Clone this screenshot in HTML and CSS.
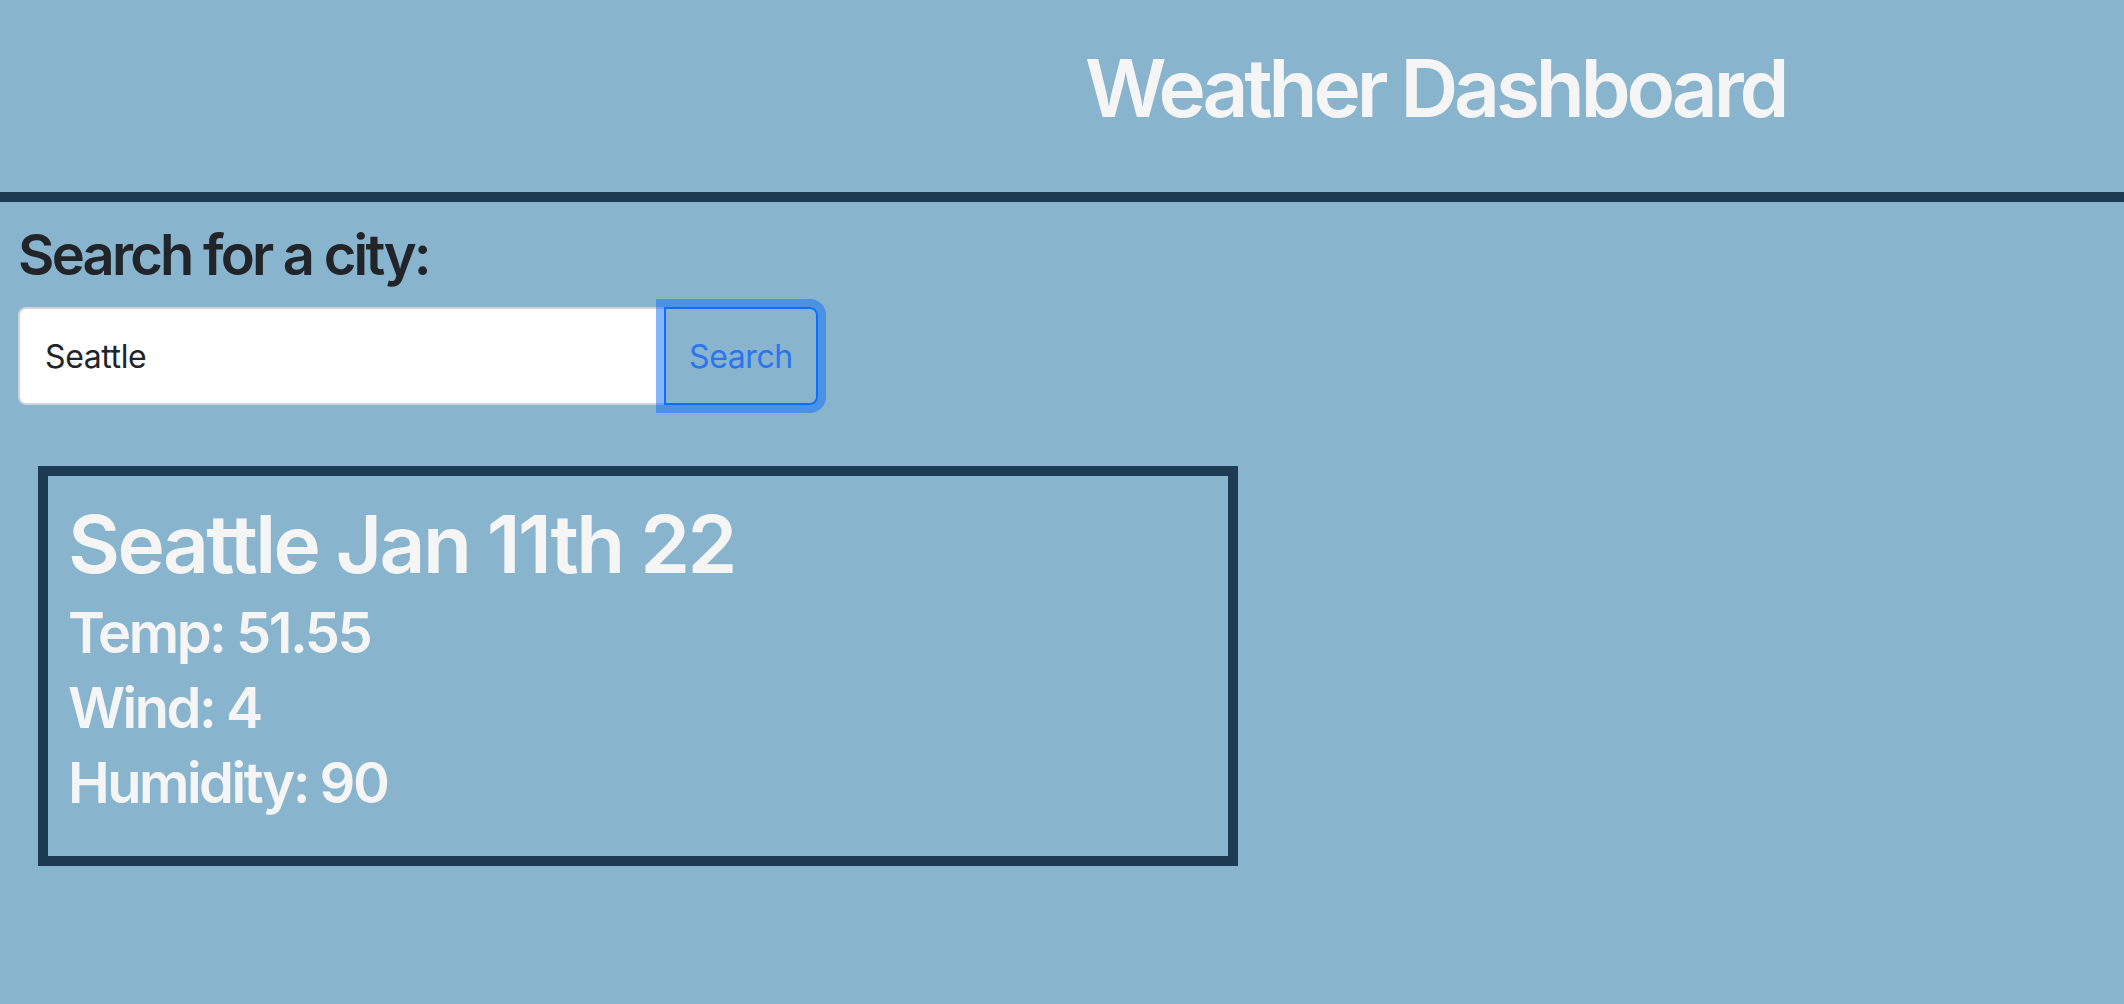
FILE: index.html
```html
<!DOCTYPE html>
<html lang="en">
<head>
<meta charset="utf-8">
<title>Weather Dashboard</title>
<link rel="stylesheet" href="styles.css">
</head>
<body>
<header class="top">
  <h1 class="title">Weather Dashboard</h1>
</header>
<main class="content">
  <h3 class="label">Search for a city:</h3>
  <div class="search">
    <input class="field" type="text" value="Seattle">
    <button class="btn" type="button">Search</button>
  </div>
  <section class="card">
    <h1 class="city">Seattle Jan 11th 22</h1>
    <p class="stat">Temp: 51.55</p>
    <p class="stat">Wind: 4</p>
    <p class="stat">Humidity: 90</p>
  </section>
</main>
</body>
</html>
```
FILE: styles.css
```css
* { box-sizing: border-box; }
html, body { margin: 0; padding: 0; }
body {
  background: #88b4ce;
  font-family: Inter, "Noto Sans", "Liberation Sans", sans-serif;
  color: #212529;
  height: 1004px;
  overflow: hidden;
}
.top {
  height: 202px;
  border-bottom: 10px solid #1d3b53;
  padding: 40px 0 0 1085px;
}
.title {
  margin: 0;
  font-size: 80px;
  font-weight: 600;
  line-height: 96px;
  color: #f5f5f5;
  letter-spacing: -4.1px;
}
.content {
  padding: 20px 0 0 18px;
}
.label {
  margin: 0 0 18px;
  font-size: 56px;
  font-weight: 600;
  line-height: 67px;
  letter-spacing: -2.75px;
}
.search {
  display: flex;
  width: 800px;
}
.field {
  width: 646px;
  height: 98px;
  border: 2px solid #ced4da;
  border-right: none;
  border-radius: 8px 0 0 8px;
  background: #fff;
  padding: 0 25px;
  font-family: inherit;
  font-size: 32px;
  letter-spacing: -0.4px;
  color: #212529;
  outline: none;
}
.btn {
  width: 154px;
  height: 98px;
  border: 2px solid #0d6efd;
  border-radius: 0 8px 8px 0;
  background: transparent;
  color: #2a74f0;
  font-family: inherit;
  font-size: 32px;
  letter-spacing: -0.4px;
  box-shadow: 0 0 0 8px rgba(13, 110, 253, 0.5);
  position: relative;
  z-index: 1;
  padding: 0;
}
.card {
  margin: 61px 0 0 20px;
  width: 1200px;
  height: 400px;
  border: 10px solid #1d3b53;
  padding: 20px 20px 0 20px;
  color: #f5f5f5;
}
.city {
  margin: 0 0 4px;
  font-size: 80px;
  font-weight: 600;
  line-height: 96px;
  letter-spacing: -2.6px;
}
.stat {
  margin: 0;
  font-size: 56px;
  font-weight: 600;
  line-height: 75px;
  letter-spacing: -2.5px;
}
```
